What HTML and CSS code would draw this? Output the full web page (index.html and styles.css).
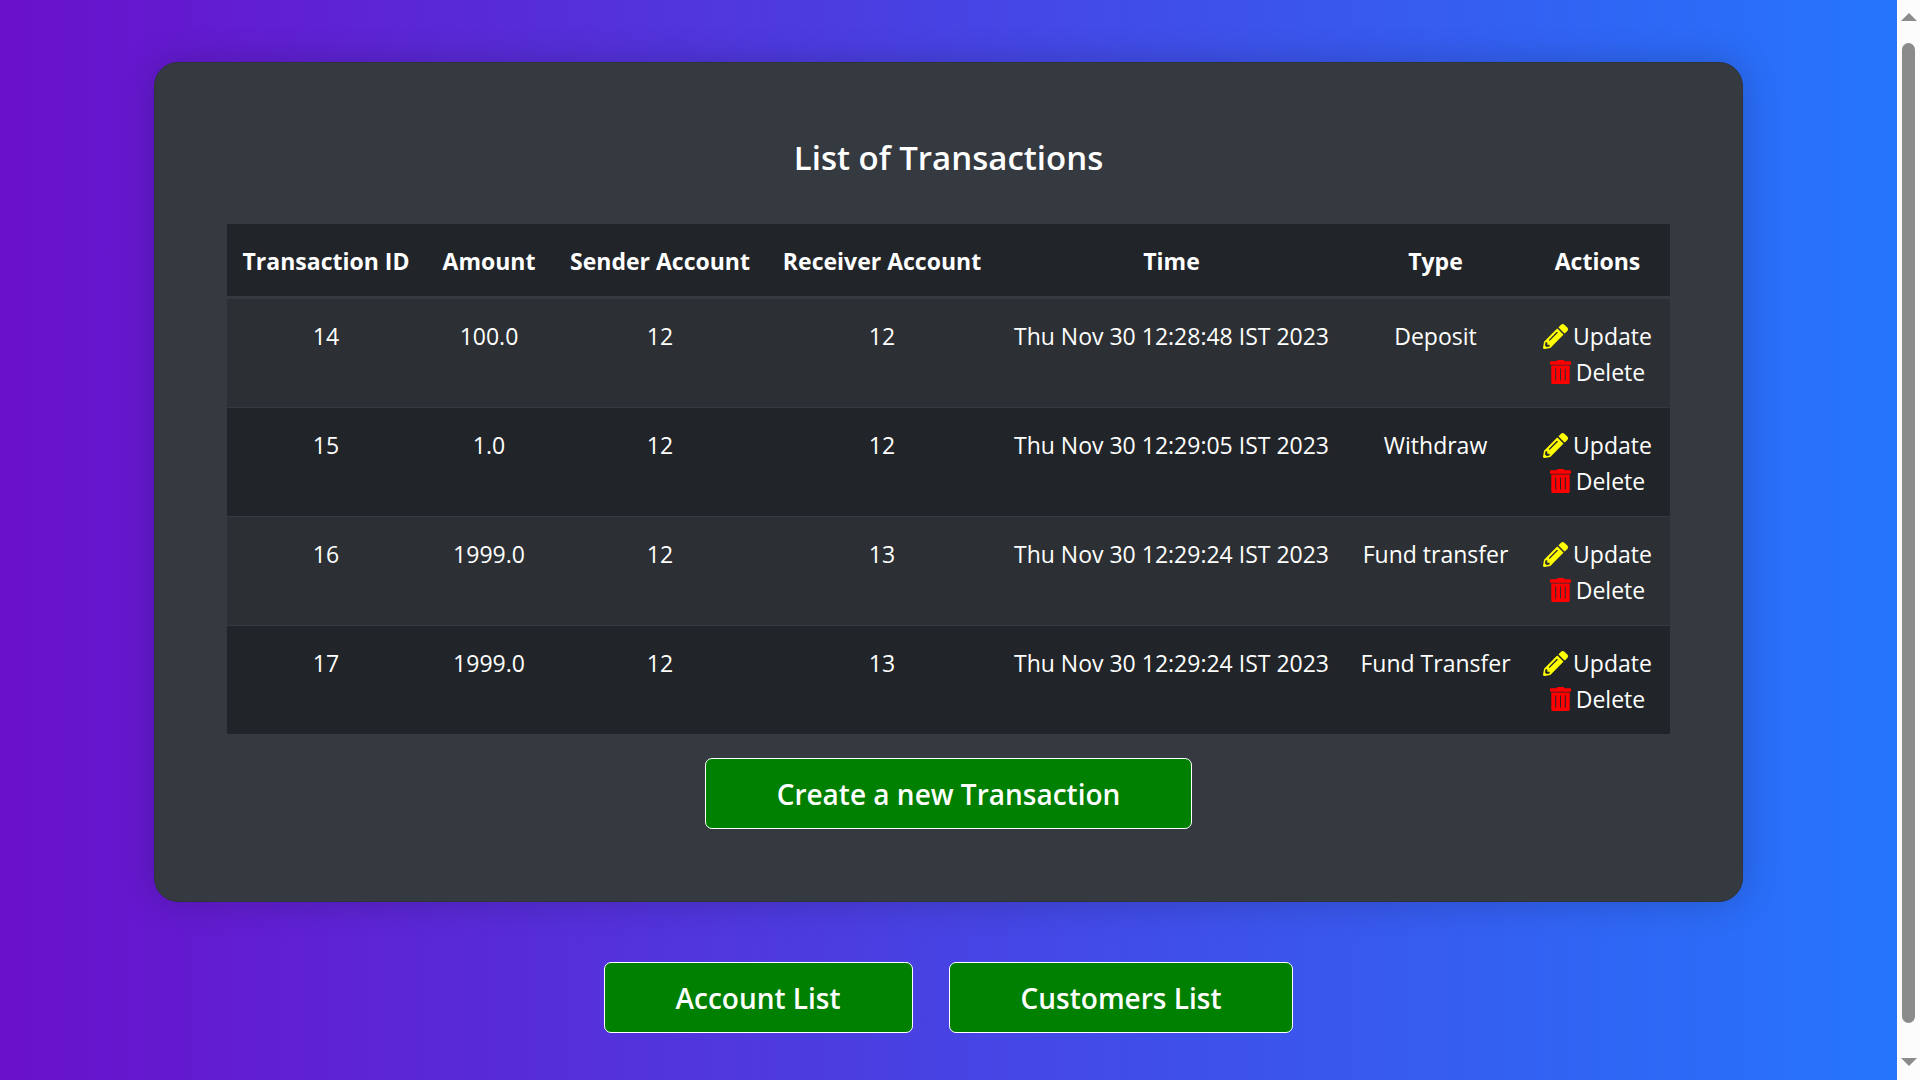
FILE: index.html
```html
<!DOCTYPE html>
<html lang="en">
<head>
<meta charset="utf-8">
<title>List of Transactions</title>
<link rel="stylesheet" href="styles.css">
</head>
<body>
<svg class="sprite" aria-hidden="true">
  <symbol id="pencil" viewBox="0 0 512 512"><path d="M497.9 142.1l-46.1 46.1c-4.7 4.7-12.3 4.7-17 0l-111-111c-4.7-4.7-4.7-12.3 0-17l46.1-46.1c18.7-18.7 49.1-18.7 67.9 0l60.1 60.1c18.8 18.7 18.8 49.1 0 67.9zM284.2 99.8L21.6 362.4.4 483.9c-2.9 16.4 11.4 30.6 27.8 27.8l121.5-21.3 262.6-262.6c4.7-4.7 4.7-12.3 0-17l-111-111c-4.8-4.7-12.4-4.7-17.1 0zM124.1 339.9c-5.5-5.5-5.5-14.3 0-19.8l154-154c5.5-5.5 14.3-5.5 19.8 0s5.5 14.3 0 19.8l-154 154c-5.5 5.5-14.3 5.5-19.8 0zM88 424h48v36.3l-64.5 11.3-31.1-31.1L51.7 376H88v48z"/></symbol>
  <symbol id="trash" viewBox="0 0 21 24"><path fill-rule="evenodd" d="M6.5 1.2Q6.7 0 8 0h5q1.300 0 1.500 1.200H20.300Q21 1.200 21 2V4q0 .8-.7.800H.7Q0 4.800 0 4V2q0-.8.7-.8zM1.300 5.500H19.700V22.500q0 1.500-1.500 1.500H2.800q-1.500 0-1.500-1.500zM5.200 8.500V20.500H6.200V8.500zM10 8.500V20.500H11V8.500zM14.800 8.500V20.500H15.800V8.500z"/></symbol>
</svg>
<main class="page">
  <section class="card">
    <h1 class="title">List of Transactions</h1>
    <table class="transactions">
      <colgroup>
        <col class="col-id"><col class="col-amount"><col class="col-sender"><col class="col-receiver"><col class="col-time"><col class="col-type"><col class="col-actions">
      </colgroup>
      <thead>
        <tr><th>Transaction ID</th><th>Amount</th><th>Sender Account</th><th>Receiver Account</th><th>Time</th><th>Type</th><th>Actions</th></tr>
      </thead>
      <tbody>
        <tr>
          <td>14</td><td>100.0</td><td>12</td><td>12</td><td>Thu Nov 30 12:28:48 IST 2023</td><td>Deposit</td>
          <td><a class="action" href="#"><svg class="icon-pencil"><use href="#pencil"/></svg>Update</a><a class="action" href="#"><svg class="icon-trash"><use href="#trash"/></svg>Delete</a></td>
        </tr>
        <tr>
          <td>15</td><td>1.0</td><td>12</td><td>12</td><td>Thu Nov 30 12:29:05 IST 2023</td><td>Withdraw</td>
          <td><a class="action" href="#"><svg class="icon-pencil"><use href="#pencil"/></svg>Update</a><a class="action" href="#"><svg class="icon-trash"><use href="#trash"/></svg>Delete</a></td>
        </tr>
        <tr>
          <td>16</td><td>1999.0</td><td>12</td><td>13</td><td>Thu Nov 30 12:29:24 IST 2023</td><td>Fund transfer</td>
          <td><a class="action" href="#"><svg class="icon-pencil"><use href="#pencil"/></svg>Update</a><a class="action" href="#"><svg class="icon-trash"><use href="#trash"/></svg>Delete</a></td>
        </tr>
        <tr>
          <td>17</td><td>1999.0</td><td>12</td><td>13</td><td>Thu Nov 30 12:29:24 IST 2023</td><td>Fund Transfer</td>
          <td><a class="action" href="#"><svg class="icon-pencil"><use href="#pencil"/></svg>Update</a><a class="action" href="#"><svg class="icon-trash"><use href="#trash"/></svg>Delete</a></td>
        </tr>
      </tbody>
    </table>
    <button class="btn" type="button">Create a new Transaction</button>
  </section>
  <nav class="links">
    <button class="btn" type="button">Account List</button>
    <button class="btn" type="button">Customers List</button>
  </nav>
</main>
<div class="scrollbar" aria-hidden="true">
  <span class="arrow arrow-up"></span>
  <span class="thumb"></span>
  <span class="arrow arrow-down"></span>
</div>
</body>
</html>
```
FILE: styles.css
```css
* {
  box-sizing: border-box;
}

body {
  margin: 0;
  min-height: 100vh;
  display: flex;
  background: #fcfcfc;
  color: #fff;
  font-family: "Open Sans", "Noto Sans", sans-serif;
  font-size: 23px;
  line-height: 36px;
}

.sprite {
  display: none;
}

.page {
  flex: 1;
  min-width: 0;
  padding: 62px 154px 44px;
  background: linear-gradient(to right, #6a11cb, #2575fc);
}

.card {
  display: flex;
  flex-direction: column;
  align-items: center;
  padding: 72px;
  border: 1px solid #2f343a;
  border-radius: 24px;
  background: #343a40;
  box-shadow: 0 0 36px rgba(0, 0, 0, 0.2);
}

.title {
  margin: 0 0 43px;
  font-size: 33px;
  font-weight: 600;
  line-height: 46px;
}

.transactions {
  width: 100%;
  margin-bottom: 23px;
  table-layout: fixed;
  border-collapse: separate;
  border-spacing: 0;
  background: #212529;
  text-align: center;
}

.col-id { width: 198px; }
.col-amount { width: 128px; }
.col-sender { width: 214px; }
.col-receiver { width: 230px; }
.col-time { width: 349px; }
.col-type { width: 179px; }
.col-actions { width: 145px; }

th,
td {
  padding: 19px 0 17px;
  vertical-align: top;
  white-space: nowrap;
}

th {
  border-bottom: 3px solid #343a40;
  font-weight: 700;
}

td {
  border-bottom: 1px solid #343a40;
}

tbody tr:nth-child(odd) {
  background: #2c3034;
}

.action {
  display: flex;
  align-items: center;
  justify-content: center;
  gap: 5px;
  color: #fff;
  text-decoration: none;
}

.icon-pencil {
  width: 25px;
  height: 25px;
  fill: #ff0;
}

.icon-trash {
  width: 21px;
  height: 24px;
  fill: #f00;
}

.btn {
  padding: 13px 71px 12px;
  border: 1px solid #fff;
  border-radius: 7px;
  background: #008000;
  color: #fff;
  font-family: inherit;
  font-size: 28px;
  font-weight: 600;
  line-height: 44px;
}

.links {
  display: flex;
  justify-content: center;
  gap: 36px;
  margin-top: 60px;
}

.scrollbar {
  flex: none;
  width: 23px;
  display: flex;
  flex-direction: column;
  align-items: center;
  gap: 22px;
  padding: 13px 0 14px;
}

.arrow {
  border: 8px solid transparent;
}

.arrow-up {
  border-top: 0;
  border-bottom-color: #8b8b8b;
}

.arrow-down {
  margin-top: 13px;
  border-bottom: 0;
  border-top-color: #8b8b8b;
}

.thumb {
  flex: 1;
  width: 13px;
  border-radius: 7px;
  background: #8b8b8b;
}
```
